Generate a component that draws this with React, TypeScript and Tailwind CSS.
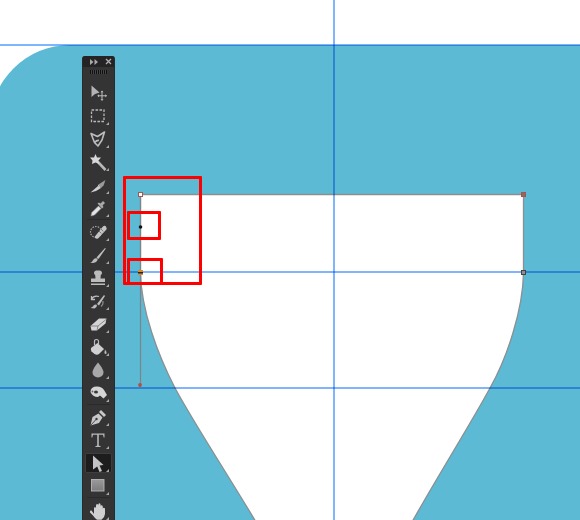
import React from "react";

const g = "#bcbcbc";

const icons: Record<string, React.ReactNode> = {
  move: (
    <>
      <path d="M3.5 2.5 L3.5 14 L7 11 L11.5 9.5 Z" fill="#b4b4b4" />
      <path d="M14 8.5 V17 M10 12.8 H18.5" stroke={g} strokeWidth="1" />
      <path d="M14 7.5 l-1.5 1.7 h3 Z M14 18 l-1.5 -1.7 h3 Z M9.3 12.8 l1.7 -1.5 v3 Z M19 12.8 l-1.7 -1.5 v3 Z" fill={g} />
    </>
  ),
  marquee: <rect x="3.5" y="4" width="12.5" height="11.5" fill="none" stroke="#b8b8b8" strokeWidth="1.3" strokeDasharray="2.6 1.4" />,
  lasso: <path d="M3 4.5 L9.5 7.5 L16.5 3 L14 11 L10 17 L6.5 13.5 Z M6.5 13.5 Q9 11 11 11.5" fill="none" stroke={g} strokeWidth="1.6" strokeLinejoin="round" />,
  wand: (
    <>
      <path d="M10 10 L17.5 18" stroke="#b8b8b8" strokeWidth="2.6" />
      <path d="M7.5 2 L9 5.5 L13 5.5 L10.5 8.5 L11.5 12 L7.5 10.5 L4 12 L4.5 8.5 L2 5.5 L6 5.5 Z" fill="#d8d8d8" />
    </>
  ),
  quick: (
    <>
      <path d="M2.5 17.5 L10 11 L13 13 L8 16 Z" fill="#cfcfcf" />
      <path d="M10.5 9.5 L17.5 5 L15.5 10.5 L13 13 Z" fill="#9a9a9a" />
      <path d="M10.5 9.5 L13 13 L10 11 Z" fill="#e0e0e0" />
    </>
  ),
  dropper: (
    <>
      <path d="M3 18 L3.8 14.5 L10.5 8 L13 10.5 L6.5 17 Z" fill="#e4e4e4" stroke="#999" strokeWidth="0.6" />
      <path d="M9.5 5.5 L11 4.5 L12.5 5.5 L15 3 L17 5 L14.5 7.5 L15.5 9 L14 10.5 Z" fill="#a8a8a8" />
    </>
  ),
  heal: (
    <>
      <circle cx="8" cy="10" r="5.5" fill="none" stroke="#aaa" strokeWidth="1.2" strokeDasharray="1.5 1.2" />
      <path d="M6.5 15 L14.5 5 Q16.5 3 18 4.5 Q19.5 6.5 17.5 8.5 L10 16.5 Q7.5 17.5 6.5 15 Z" fill="#c4c4c4" />
      <path d="M11 9 l2.4 2.4 M13 7 l2.4 2.4" stroke="#7a7a7a" strokeWidth="1" />
    </>
  ),
  brush: <path d="M2 17.5 Q4.5 17 5.5 14.5 Q7 12.5 9.5 13.5 Q10 15.5 8 17 Q5 18.5 2 17.5 Z M8.5 12.5 L17 3 L17.8 3.5 L10.5 14 Z" fill={g} />,
  stamp: <path d="M8 2.5 h4 a2.5 2.5 0 0 1 0.8 4.6 L12.5 10.5 H17 V14 H3 V10.5 H7.5 L7.2 7.1 A2.5 2.5 0 0 1 8 2.5 Z M3 15.5 H17 V17 H3 Z" fill={g} />,
  history: (
    <>
      <path d="M2.5 17 Q5 16 6 14 Q8 13 9 14 Q9 16.5 6.5 17.5 Z M9 13 L16 4 L17 5 L11 14.5 Z" fill={g} />
      <path d="M3.5 8 Q6 4 11 5.5 M3.5 5 V8.5 H7" fill="none" stroke={g} strokeWidth="1.3" />
      <path d="M15 10 Q15.5 13.5 13 15.5" fill="none" stroke="#888" strokeWidth="1.2" />
    </>
  ),
  eraser: (
    <>
      <path d="M2.5 12 L11 4.5 H18.5 L17.5 9.5 L9 16.5 H3.5 Z" fill="#d4d4d4" />
      <path d="M2.5 12 H10 L18 5.5 M10 12 L9 16.5" stroke="#666" strokeWidth="0.7" fill="none" />
    </>
  ),
  bucket: (
    <>
      <path d="M3 11 L9.5 6 L16 12 L11 17 Q9 18.5 6.5 17 L3.5 14.5 Q2.5 12.5 3 11 Z" fill="#d0d0d0" />
      <path d="M6.5 8 V4.5 Q6.5 2.5 8.5 2.5 Q10.5 2.5 10.5 4.5 V7.5" fill="none" stroke={g} strokeWidth="1.2" />
      <path d="M17 12.5 Q19.3 15 18.3 17 Q16.5 17.5 16.5 15.5 Z" fill={g} />
    </>
  ),
  drop: <path d="M10 2.5 Q15.5 9 15.5 12.5 A5.5 5 0 0 1 4.5 12.5 Q4.5 9 10 2.5 Z" fill="#a8a8a8" />,
  smudge: (
    <>
      <path d="M2.5 9 Q2.5 3.5 9 3.5 Q14 3.5 16 7 L19 12 L15.5 15.5 L12 12.5 L10 14 Q4.5 14 2.5 9 Z" fill="#d4d4d4" />
      <ellipse cx="8" cy="9" rx="2" ry="1.5" fill="#3a3a3a" />
      <circle cx="4.5" cy="8.5" r="0.9" fill="#666" />
    </>
  ),
  pen: (
    <>
      <path d="M2.5 18.5 L4.5 10 L10.5 6.5 L14.5 10.5 L11 16 Z" fill="#c8c8c8" />
      <path d="M11 5 L13 3 L18 8 L16 10 Z" fill="#c8c8c8" />
      <path d="M2.5 18.5 L8 12.5" stroke="#3a3a3a" strokeWidth="0.9" />
      <circle cx="8.5" cy="12" r="1.2" fill="#3a3a3a" />
    </>
  ),
  type: <path d="M3.5 7.5 V3.5 H16.5 V7.5 H15.7 L15 4.8 H10.8 V15.5 L12.8 16.4 V17 H7.2 V16.4 L9.2 15.5 V4.8 H5 L4.3 7.5 Z" fill="#b8b8b8" />,
  arrow: <path d="M5 2.5 L15.5 12 L11.5 12.5 L14 18 L11.5 19 L9.2 13.5 L5 16.5 Z" fill="#c4c4c4" />,
  rect: (
    <>
      <defs>
        <linearGradient id="rg" x1="0" y1="0" x2="0" y2="1">
          <stop offset="0" stopColor="#9a9a9a" />
          <stop offset="1" stopColor="#7c7c7c" />
        </linearGradient>
      </defs>
      <rect x="3.5" y="3.5" width="12.5" height="11.5" fill="url(#rg)" stroke="#b8b8b8" strokeWidth="0.9" />
    </>
  ),
  hand: <path d="M3.5 9.5 L6 13 V7.5 Q6 6 7 6 Q8 6 8 7.5 V4.5 Q8 3 9.2 3 Q10.3 3 10.3 4.5 V3.8 Q10.3 2.3 11.4 2.3 Q12.6 2.3 12.6 3.8 V5.5 Q12.6 4.3 13.7 4.3 Q14.8 4.3 14.8 5.8 V8 Q14.8 6.8 15.8 6.8 Q17 6.8 17 8.2 V13 Q16.5 17 13.5 18.8 H9 Q7 17.5 5 14.5 L2 11.5 Q1.7 9 3.5 9.5 Z" fill="#d0d0d0" />,
};

function Tool({ name, flyout = true, active = false }: { name: string; flyout?: boolean; active?: boolean }) {
  return (
    <div className="relative flex h-[23px] items-center justify-center">
      {active && <div className="absolute inset-x-[2px] top-[2px] bottom-px rounded-[2px] border border-[#3e3e3e] bg-[#1d1d1d]" />}
      <svg viewBox="0 0 20 20" className="relative -ml-[2px] h-5 w-5">
        {icons[name]}
      </svg>
      {flyout && (
        <svg viewBox="0 0 4 4" className="absolute right-[5px] bottom-[2px] h-[3px] w-[3px]">
          <path d="M4 0 V4 H0 Z" fill="#a8a8a8" />
        </svg>
      )}
    </div>
  );
}

const Sep = () => <div className="mx-[4px] h-px bg-[#2a2a2a]" />;

function Toolbar() {
  return (
    <div className="absolute top-[56px] left-[82px] flex h-[480px] w-[33px] flex-col overflow-hidden rounded-t-[3px] border-x border-[#2a2a2a] bg-[#343434]">
      <div className="flex h-[11px] items-center justify-between bg-[#242424] pr-[2px] pl-[7px]">
        <svg viewBox="0 0 8 6" className="h-[6px] w-2">
          <path d="M0 0 L3.5 3 L0 6 Z M4.5 0 L8 3 L4.5 6 Z" fill="#a8a8a8" />
        </svg>
        <svg viewBox="0 0 7 7" className="h-[7px] w-[7px]">
          <path d="M1 1 L6 6 M6 1 L1 6" stroke="#b0b0b0" strokeWidth="1.3" />
        </svg>
      </div>
      <div className="mt-[3px] ml-[7px] h-[4px] w-[17px] bg-[repeating-linear-gradient(90deg,#111_0,#111_1px,#444_1px,#444_2px)]" />
      <div className="mt-[7px] flex flex-col">
        <Tool name="move" flyout={false} />
        <Tool name="marquee" />
        <Tool name="lasso" />
        <Tool name="wand" />
        <Tool name="quick" />
        <Tool name="dropper" />
        <Sep />
        <Tool name="heal" />
        <Tool name="brush" />
        <Tool name="stamp" />
        <Tool name="history" />
        <Tool name="eraser" />
        <Tool name="bucket" />
        <Tool name="drop" />
        <Tool name="smudge" />
        <Sep />
        <Tool name="pen" />
        <Tool name="type" />
        <Tool name="arrow" active />
        <Tool name="rect" />
        <Sep />
        <div className="mt-px">
          <Tool name="hand" />
        </div>
      </div>
    </div>
  );
}

function Shape() {
  return (
    <svg viewBox="0 0 580 520" className="absolute inset-0 h-[520px] w-[580px]">
      <path
        d="M140.5 194.5 H523.5 V272.5 C523 310 507 358 490 388 C470 425 440 472 412 522 L406 532 H262 L256 522 C225 470 195 425 175 388 C158 355 141 310 140.5 272.5 Z"
        fill="#fff"
        stroke="#8a8f91"
        strokeWidth="1.3"
      />
      <path d="M140.5 194 V385" stroke="#7e8588" strokeWidth="1.2" />
    </svg>
  );
}

function Anchors() {
  return (
    <svg viewBox="0 0 580 520" className="absolute inset-0 h-[520px] w-[580px]">
      <rect x="138.5" y="192.5" width="4" height="4" fill="#fff" stroke="#a5584f" strokeWidth="1" />
      <circle cx="140.5" cy="227" r="1.8" fill="#111" />
      <rect x="138" y="270" width="5" height="5" fill="#d98a2b" />
      <rect x="138" y="272" width="5" height="1.5" fill="#222" />
      <circle cx="140" cy="385" r="1.9" fill="#b5503a" />
      <rect x="521.5" y="192.5" width="4" height="4" fill="#8a6a66" stroke="#b0504a" strokeWidth="1" />
      <rect x="521.5" y="270.5" width="4" height="4" fill="#8f8f8f" stroke="#444" strokeWidth="1" />
    </svg>
  );
}

export default function App() {
  return (
    <div className="relative h-[520px] w-[580px] overflow-hidden bg-white">
      <div className="mt-[45px] -ml-[10px] h-[475px] rounded-tl-[80px] bg-[#5cbad5]" />
      <Shape />
      <div className="absolute top-[44px] left-0 h-[2px] w-full bg-[#80b5fb] mix-blend-multiply" />
      <div className="absolute top-[271px] left-0 h-[2px] w-full bg-[#80b5fb] mix-blend-multiply" />
      <div className="absolute top-[387px] left-0 h-[2px] w-full bg-[#80b5fb] mix-blend-multiply" />
      <div className="absolute top-0 left-[333px] h-full w-[2px] bg-[#80b5fb] mix-blend-multiply" />
      <Anchors />
      <div className="absolute top-[176px] left-[123px] h-[109px] w-[79px] rounded-[1px] border-[3.5px] border-[#fe0000]" />
      <div className="absolute top-[211px] left-[127px] h-[29px] w-[34px] rounded-[1px] border-[3.5px] border-[#fe0000]" />
      <div className="absolute top-[258px] left-[127px] h-[27px] w-[36px] rounded-[1px] border-[3.5px] border-[#fe0000]" />
      <Toolbar />
    </div>
  );
}
